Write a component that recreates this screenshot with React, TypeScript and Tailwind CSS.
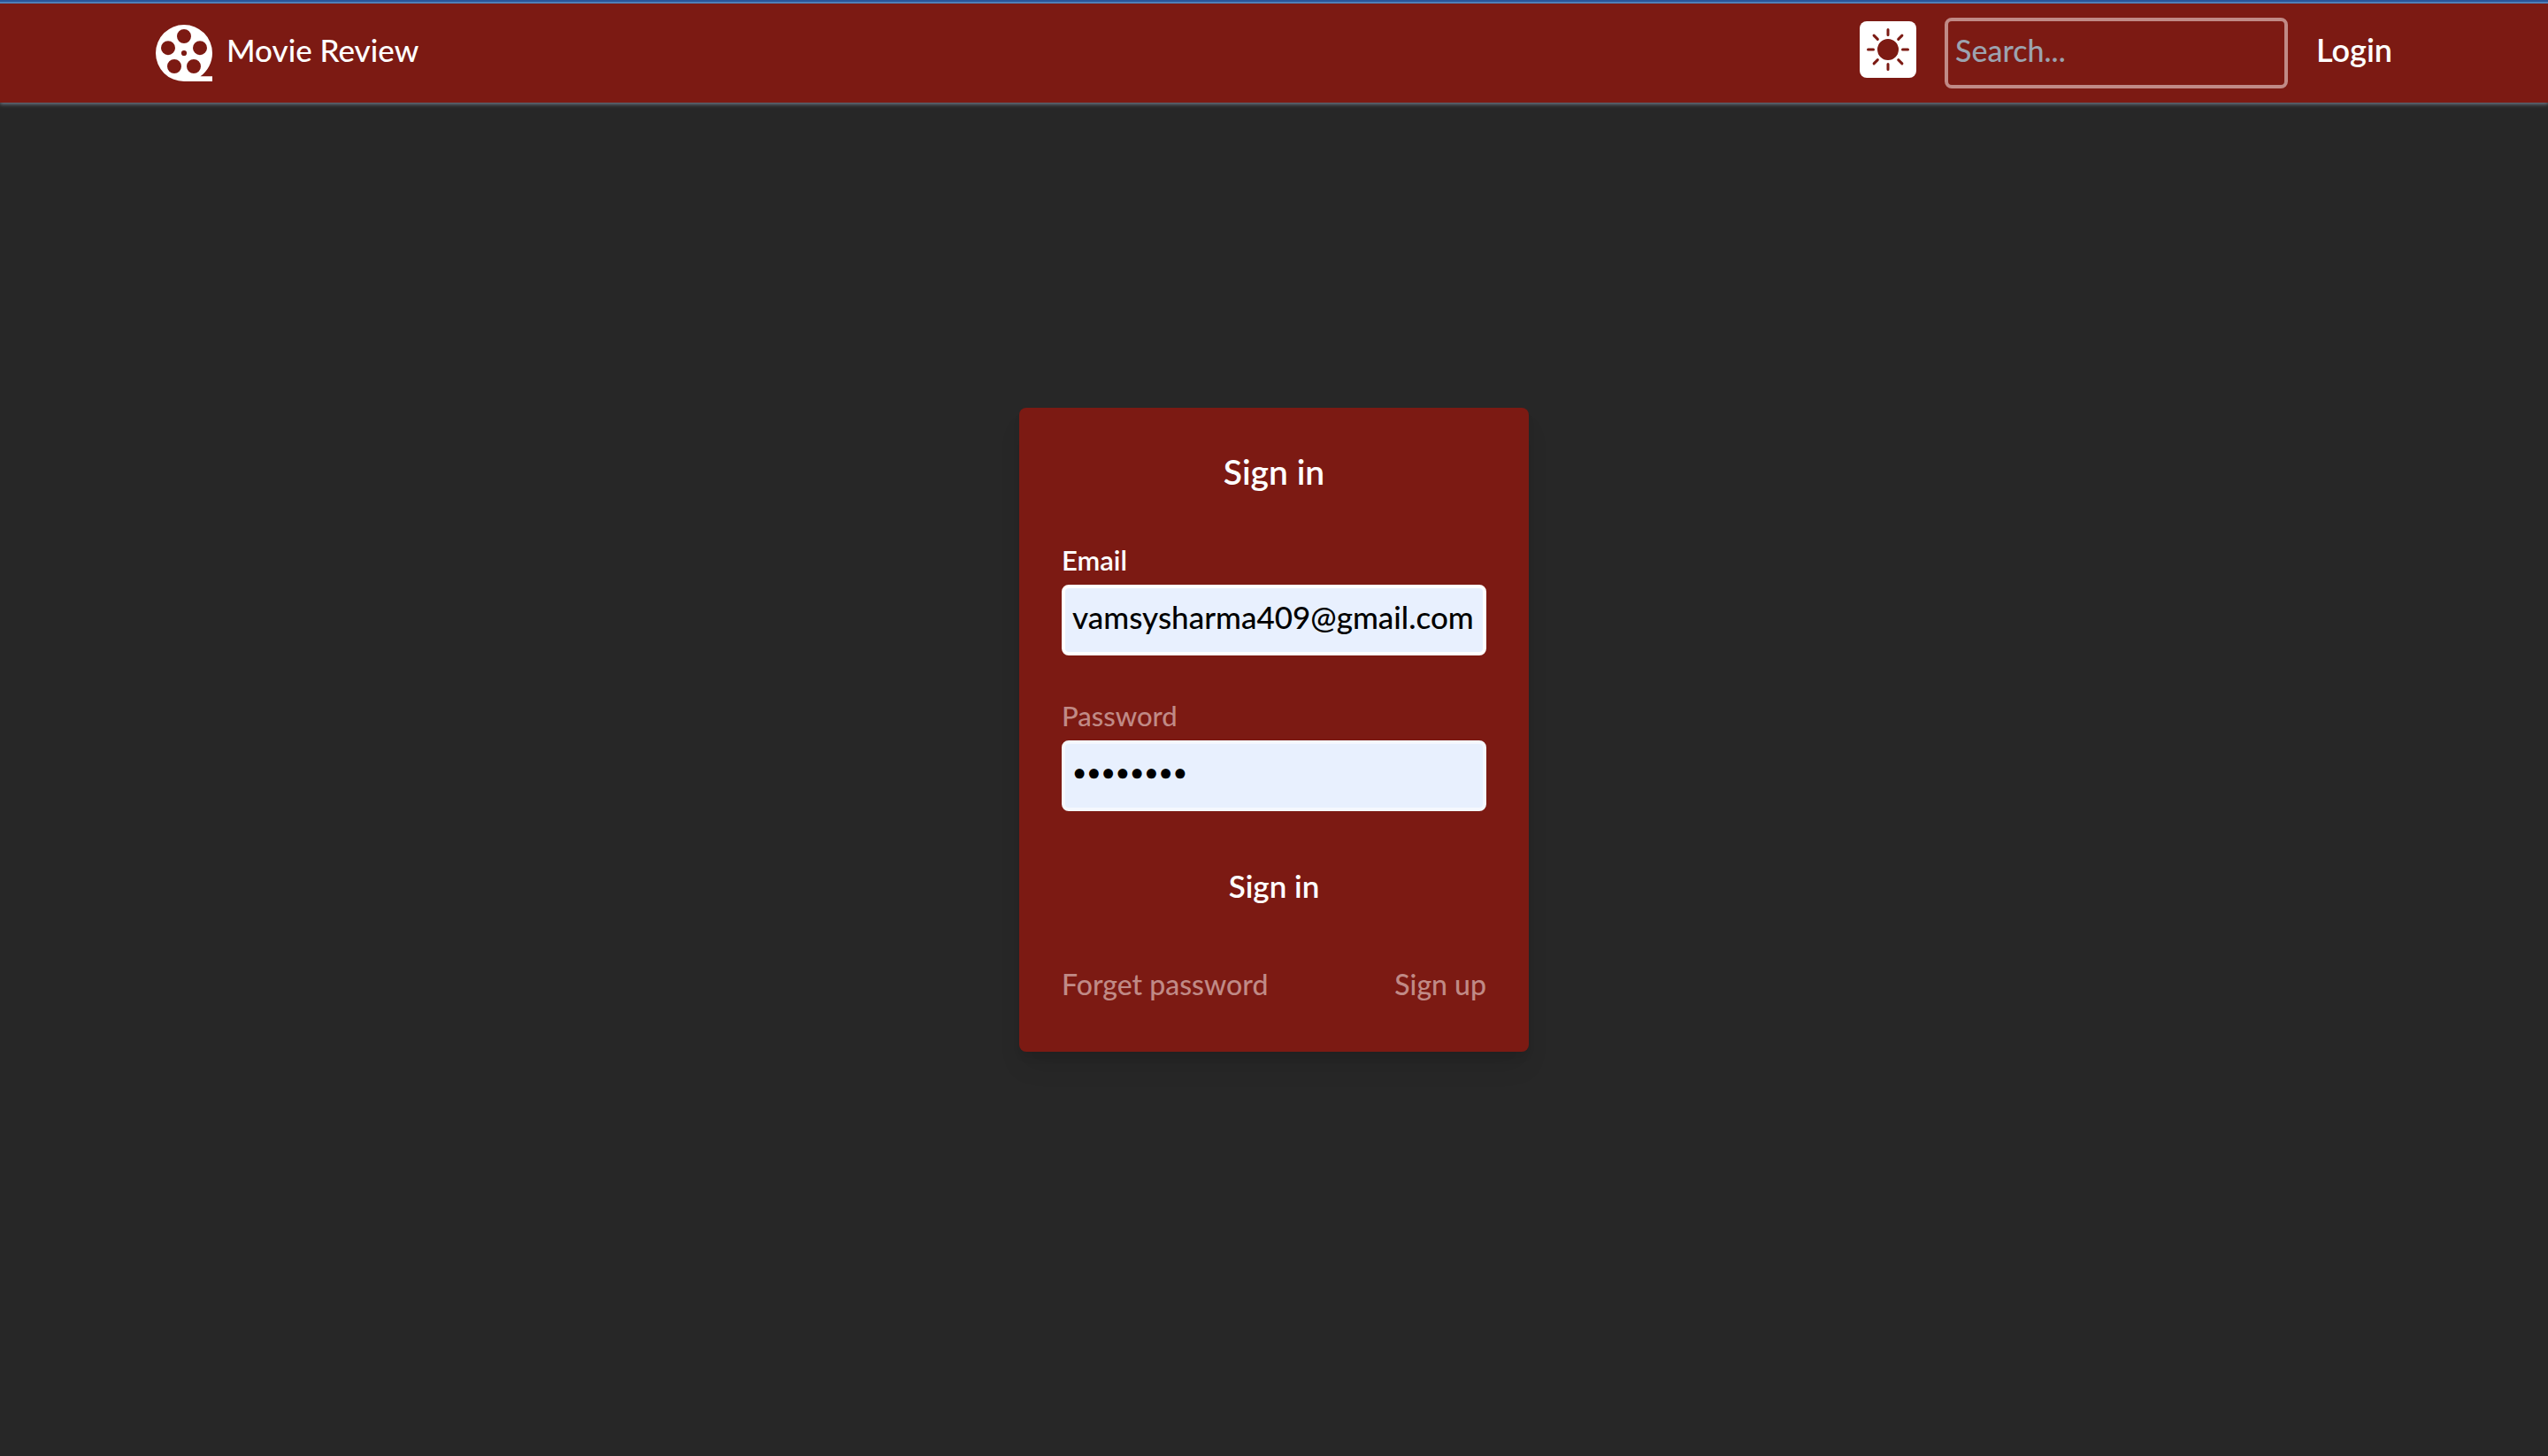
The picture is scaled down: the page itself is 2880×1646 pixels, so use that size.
import { BsFillSunFill } from "react-icons/bs";

function FilmReel() {
  return (
    <svg viewBox="0 0 64 64" className="size-16 shrink-0" fill="currentColor" aria-hidden="true">
      <path
        fillRule="evenodd"
        d="M32 64A32 32 0 1 1 64 32C64 42.4 58.6 52.6 50.5 58.3H64V64ZM32 5a8 8 0 1 0 0 16a8 8 0 0 0 0-16ZM14 18.2a8 8 0 1 0 0 16a8 8 0 0 0 0-16ZM50 18.2a8 8 0 1 0 0 16a8 8 0 0 0 0-16ZM21 39a8 8 0 1 0 0 16a8 8 0 0 0 0-16ZM43 39a8 8 0 1 0 0 16a8 8 0 0 0 0-16ZM32 28.9a3.1 3.1 0 1 0 0 6.2a3.1 3.1 0 0 0 0-6.2Z"
      />
    </svg>
  );
}

function Header() {
  return (
    <header className="border-t-2 border-[#2a5599] bg-[#7c1a13] shadow-[0_2px_4px_0_#6b7280]">
      <div className="border-t-2 border-[#5080b8]">
        <div className="mx-auto flex h-28 max-w-[2560px] items-center justify-between px-4">
          <a href="#" className="flex items-center gap-4 text-[35px] font-medium">
            <FilmReel />
            <span className="pb-2">Movie Review</span>
          </a>
          <nav className="flex items-center gap-8">
            <button type="button" aria-label="Toggle theme" className="mb-2 rounded-lg bg-white p-2 text-[#7c1a13]">
              <BsFillSunFill className="size-12" />
            </button>
            <input
              type="search"
              aria-label="Search"
              placeholder="Search..."
              className="h-20 w-[388px] rounded-lg border-4 border-[#c08a86] bg-transparent px-2 pb-2 text-[34px] font-medium outline-none placeholder:text-[#9ca3af]"
            />
            <a href="#login" className="pb-2 text-[36px] font-semibold">Login</a>
          </nav>
        </div>
      </div>
    </header>
  );
}

type FieldProps = {
  id: string;
  label: string;
  type: string;
  value: string;
  labelClass: string;
  inputClass: string;
};

function Field({ id, label, type, value, labelClass, inputClass }: FieldProps) {
  return (
    <div className="flex flex-col gap-2">
      <label htmlFor={id} className={`leading-10 ${labelClass}`}>{label}</label>
      <input
        id={id}
        type={type}
        defaultValue={value}
        className={`h-20 w-full rounded-lg border-4 bg-[#e8f0fe] px-2 pb-2 font-medium text-black outline-none ${inputClass}`}
      />
    </div>
  );
}

export default function App() {
  return (
    <div className="flex min-h-screen flex-col bg-[#272727] font-[Lato,sans-serif] text-white">
      <Header />
      <main className="flex flex-1 items-center justify-center pb-28">
        <form className="flex w-[576px] flex-col gap-12 rounded-lg bg-[#7c1a13] p-12 shadow-[0_20px_30px_-6px_#0000001a,0_8px_12px_-4px_#0000001a]">
          <h1 className="pb-2 text-center text-[39px] leading-12 font-semibold">Sign in</h1>
          <Field id="email" label="Email" type="email" value="vamsysharma409@gmail.com" labelClass="text-[31px] font-semibold" inputClass="border-white text-[35px]" />
          <Field id="password" label="Password" type="password" value="password" labelClass="text-[31px] font-medium text-[#c08a86]" inputClass="border-[#f5f8fe] text-[28px]" />
          <button type="button" className="h-18 text-[35px] font-semibold">Sign in</button>
          <div className="flex items-center justify-between text-[32px] leading-14 font-medium text-[#c08a86]">
            <a href="#forget">Forget password</a>
            <a href="#signup">Sign up</a>
          </div>
        </form>
      </main>
    </div>
  );
}
